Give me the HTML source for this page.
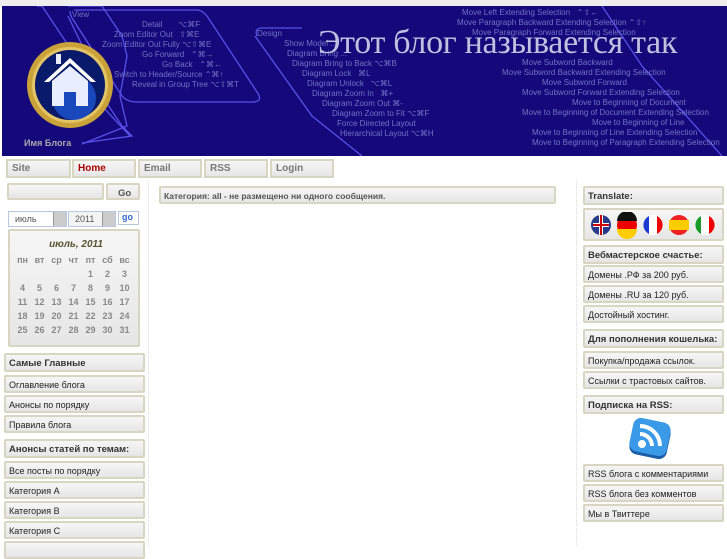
<!DOCTYPE html>
<html><head><meta charset="utf-8"><style>
body{margin:0;width:727px;height:545px;overflow:hidden;background:#fff;font-family:"Liberation Sans",sans-serif;position:relative}
.a{position:absolute;box-sizing:border-box}
.bx{position:absolute;box-sizing:border-box;border:2px solid #d6d6c2;border-radius:2px;background:linear-gradient(#f6f6f6,#e6e6e6);font-size:9px;color:#222;padding:3px 0 0 3px;white-space:nowrap;overflow:hidden}
.h{font-weight:bold;font-size:9.5px;color:#333}
.nav{position:absolute;top:159px;height:19px;box-sizing:border-box;border:2px solid #d6d6c2;background:linear-gradient(#f6f6f6,#e6e6e6);font-size:10px;font-weight:bold;color:#777;padding:2px 0 0 4px}
.ban{position:absolute;left:2px;top:6px;width:725px;height:150px;background:#14087a;overflow:hidden}
.mt{position:absolute;color:#8c8cd8;font-size:8px;white-space:nowrap;opacity:.8}
.cal td{font-size:9px;color:#888;text-align:center;width:17px;height:14px;font-weight:bold}
</style></head><body>
<div class="a" style="left:0;top:0;width:727px;height:6px;background:#eee"></div>
<div class="ban">
<svg class="a" style="left:0;top:0" width="725" height="150">
<g fill="none" stroke="#5a50e8" stroke-width="1.3">
<path d="M66 0 L100 0 L120 30 L125 50 L118 90 L125 120 L80 138"/>
<path d="M66 10 L90 60 L100 100 L128 130"/>
<path d="M35 0 L40 0 L120 120 L130 130 L80 137"/>
<path d="M68 5 Q68 8 70 12 L120 90 Q125 96 135 96 L250 96 Q262 96 255 86 L205 10 Q200 4 195 4 L72 4"/>
<path d="M255 30 Q252 22 260 22 L300 22 M253 30 L310 110 L360 150"/>
<path d="M600 0 L640 60 L720 150"/>
</g>
<circle cx="68" cy="79" r="43" fill="#c9a23a"/>
<circle cx="68" cy="79" r="38" fill="#e3c566"/>
<circle cx="68" cy="79" r="35" fill="#0a1a6a"/>
<circle cx="72" cy="92" r="22" fill="#1f5be0" opacity=".7"/>
<path d="M42 76 L68 52 L94 76 L89 76 L68 57 L47 76Z" fill="#fff"/>
<path d="M50 75 L68 60 L86 75 L86 100 L74 100 L74 86 L62 86 L62 100 L50 100Z" fill="#e8eeff"/>
<rect x="54" y="48" width="5" height="10" fill="#e8eeff"/>
</svg>
<div class="mt" style="left:70px;top:4px">View</div>
<div class="mt" style="left:140px;top:14px">Detail &nbsp; &nbsp; &nbsp; ⌥⌘F</div>
<div class="mt" style="left:112px;top:24px">Zoom Editor Out &nbsp; ⇧⌘E</div>
<div class="mt" style="left:100px;top:34px">Zoom Editor Out Fully ⌥⇧⌘E</div>
<div class="mt" style="left:140px;top:44px">Go Forward &nbsp; ⌃⌘→</div>
<div class="mt" style="left:160px;top:54px">Go Back &nbsp; ⌃⌘←</div>
<div class="mt" style="left:112px;top:64px">Switch to Header/Source ⌃⌘↑</div>
<div class="mt" style="left:130px;top:74px">Reveal in Group Tree ⌥⇧⌘T</div>
<div class="mt" style="left:255px;top:23px">Design</div>
<div class="mt" style="left:282px;top:33px">Show Model ...</div>
<div class="mt" style="left:285px;top:43px">Diagram Bring ...</div>
<div class="mt" style="left:290px;top:53px">Diagram Bring to Back ⌥⌘B</div>
<div class="mt" style="left:300px;top:63px">Diagram Lock &nbsp; ⌘L</div>
<div class="mt" style="left:305px;top:73px">Diagram Unlock &nbsp; ⌥⌘L</div>
<div class="mt" style="left:310px;top:83px">Diagram Zoom In &nbsp; ⌘+</div>
<div class="mt" style="left:320px;top:93px">Diagram Zoom Out ⌘-</div>
<div class="mt" style="left:330px;top:103px">Diagram Zoom to Fit ⌥⌘F</div>
<div class="mt" style="left:335px;top:113px">Force Directed Layout</div>
<div class="mt" style="left:338px;top:123px">Hierarchical Layout ⌥⌘H</div>
<div class="mt" style="left:460px;top:2px">Move Left Extending Selection &nbsp; ⌃⇧←</div>
<div class="mt" style="left:455px;top:12px">Move Paragraph Backward Extending Selection ⌃⇧↑</div>
<div class="mt" style="left:470px;top:22px">Move Paragraph Forward Extending Selection</div>
<div class="mt" style="left:520px;top:52px">Move Subword Backward</div>
<div class="mt" style="left:500px;top:62px">Move Subword Backward Extending Selection</div>
<div class="mt" style="left:540px;top:72px">Move Subword Forward</div>
<div class="mt" style="left:520px;top:82px">Move Subword Forward Extending Selection</div>
<div class="mt" style="left:570px;top:92px">Move to Beginning of Document</div>
<div class="mt" style="left:520px;top:102px">Move to Beginning of Document Extending Selection</div>
<div class="mt" style="left:590px;top:112px">Move to Beginning of Line</div>
<div class="mt" style="left:530px;top:122px">Move to Beginning of Line Extending Selection</div>
<div class="mt" style="left:530px;top:132px">Move to Beginning of Paragraph Extending Selection</div>
<div class="a" style="left:316px;top:18px;font-family:'Liberation Serif',serif;font-size:34px;color:#c0c0e0;white-space:nowrap;letter-spacing:-0.3px">Этот блог называется так</div>
<div class="a" style="left:22px;top:132px;font-size:9px;font-weight:bold;color:#aaa">Имя Блога</div>
</div>
<div class="nav" style="left:6px;width:65px">Site</div>
<div class="nav" style="left:72px;width:64px;color:#a00">Home</div>
<div class="nav" style="left:138px;width:64px">Email</div>
<div class="nav" style="left:204px;width:64px">RSS</div>
<div class="nav" style="left:270px;width:64px">Login</div>
<div class="a" style="left:148px;top:180px;height:365px;border-left:1px dotted #ddd"></div>
<div class="a" style="left:576px;top:180px;height:365px;border-left:1px dotted #ddd"></div>
<div class="bx" style="left:7px;top:183px;width:97px;height:17px"></div>
<div class="bx h" style="left:106px;top:183px;width:34px;height:17px;padding-left:10px;color:#555">Go</div>
<div class="a" style="left:8px;top:211px;width:59px;height:16px;border:1px solid #b8c8e0;font-size:9px;color:#555;padding:2px 0 0 6px;background:#fff">июль<span style="position:absolute;right:0;top:0;width:12px;height:14px;background:#ccc;border-left:1px solid #999"></span></div>
<div class="a" style="left:68px;top:211px;width:48px;height:16px;border:1px solid #b8c8e0;font-size:9px;color:#555;padding:2px 0 0 6px;background:#f4f4f4">2011<span style="position:absolute;right:0;top:0;width:12px;height:14px;background:#ccc;border-left:1px solid #999"></span></div>
<div class="a" style="left:118px;top:211px;width:21px;height:14px;border:1px solid #b8c8e0;font-size:9px;color:#3366cc;font-weight:bold;padding:0 0 0 3px">go</div>
<div class="bx" style="left:8px;top:229px;width:132px;height:118px;padding:8px 0 0 4px">
<div style="text-align:center;font-style:italic;font-weight:bold;font-size:10px;color:#553;margin-bottom:3px">июль, 2011</div>
<table class="cal" cellspacing="0" cellpadding="0" style="border-collapse:collapse">
<tr><td>пн</td><td>вт</td><td>ср</td><td>чт</td><td>пт</td><td>сб</td><td>вс</td></tr>
<tr><td></td><td></td><td></td><td></td><td>1</td><td>2</td><td>3</td></tr>
<tr><td>4</td><td>5</td><td>6</td><td>7</td><td>8</td><td>9</td><td>10</td></tr>
<tr><td>11</td><td>12</td><td>13</td><td>14</td><td>15</td><td>16</td><td>17</td></tr>
<tr><td>18</td><td>19</td><td>20</td><td>21</td><td>22</td><td>23</td><td>24</td></tr>
<tr><td>25</td><td>26</td><td>27</td><td>28</td><td>29</td><td>30</td><td>31</td></tr>
</table></div>
<div class="bx h" style="left:4px;top:353px;width:141px;height:19px">Самые Главные</div>
<div class="bx" style="left:4px;top:375px;width:141px;height:18px">Оглавление блога</div>
<div class="bx" style="left:4px;top:395px;width:141px;height:18px">Анонсы по порядку</div>
<div class="bx" style="left:4px;top:415px;width:141px;height:18px">Правила блога</div>
<div class="bx h" style="left:4px;top:439px;width:141px;height:19px">Анонсы статей по темам:</div>
<div class="bx" style="left:4px;top:461px;width:141px;height:18px">Все посты по порядку</div>
<div class="bx" style="left:4px;top:481px;width:141px;height:18px">Категория A</div>
<div class="bx" style="left:4px;top:501px;width:141px;height:18px">Категория B</div>
<div class="bx" style="left:4px;top:521px;width:141px;height:18px">Категория C</div>
<div class="bx" style="left:4px;top:541px;width:141px;height:18px"></div>
<div class="bx h" style="left:159px;top:186px;width:397px;height:18px;font-size:8.5px;color:#555">Категория: all - не размещено ни одного сообщения.</div>
<div class="bx h" style="left:583px;top:186px;width:141px;height:19px">Translate:</div>
<div class="bx" style="left:583px;top:208px;width:141px;height:33px">
<svg width="135" height="28" style="position:absolute;left:5px;top:2px">
<circle cx="11" cy="13" r="10" fill="#2a3a8a"/><path d="M3 13h16M11 3v20" stroke="#fff" stroke-width="4"/><path d="M3 13h16M11 3v20" stroke="#c00" stroke-width="2"/>
<circle cx="37" cy="13" r="10" fill="#e00"/><path d="M27 9a10 10 0 0 1 20 0z" fill="#111"/><path d="M27 17h20a10 10 0 0 1-20 0z" fill="#fc0"/>
<circle cx="63" cy="13" r="10" fill="#fff"/><path d="M59 4a10 10 0 0 0 0 18z" fill="#1a3ad0"/><path d="M67 4a10 10 0 0 1 0 18z" fill="#e00"/>
<circle cx="89" cy="13" r="10" fill="#e22"/><rect x="79" y="8" width="20" height="10" fill="#fc0"/>
<circle cx="115" cy="13" r="10" fill="#fff"/><path d="M111 4a10 10 0 0 0 0 18z" fill="#1a9a2a"/><path d="M119 4a10 10 0 0 1 0 18z" fill="#e00"/>
</svg></div>
<div class="bx h" style="left:583px;top:245px;width:141px;height:19px">Вебмастерское счастье:</div>
<div class="bx" style="left:583px;top:265px;width:141px;height:18px">Домены .РФ за 200 руб.</div>
<div class="bx" style="left:583px;top:285px;width:141px;height:18px">Домены .RU за 120 руб.</div>
<div class="bx" style="left:583px;top:305px;width:141px;height:18px">Достойный хостинг.</div>
<div class="bx h" style="left:583px;top:329px;width:141px;height:19px">Для пополнения кошелька:</div>
<div class="bx" style="left:583px;top:351px;width:141px;height:18px">Покупка/продажа ссылок.</div>
<div class="bx" style="left:583px;top:371px;width:141px;height:18px">Ссылки с трастовых сайтов.</div>
<div class="bx h" style="left:583px;top:395px;width:141px;height:19px">Подписка на RSS:</div>
<svg class="a" style="left:628px;top:418px" width="46" height="44"><rect x="3" y="5" width="38" height="34" rx="8" fill="#1a5ea8" transform="rotate(12 22 22)"/><rect x="3" y="2" width="38" height="34" rx="8" fill="#3a9ae8" transform="rotate(12 22 19)"/><circle cx="14" cy="26" r="4" fill="#fff"/><path d="M12 16a12 12 0 0 1 12 12M12 8a20 20 0 0 1 20 20" stroke="#fff" stroke-width="4" fill="none"/></svg>
<div class="bx" style="left:583px;top:464px;width:141px;height:18px">RSS блога с комментариями</div>
<div class="bx" style="left:583px;top:484px;width:141px;height:18px">RSS блога без комментов</div>
<div class="bx" style="left:583px;top:504px;width:141px;height:18px">Мы в Твиттере</div>
</body></html>
